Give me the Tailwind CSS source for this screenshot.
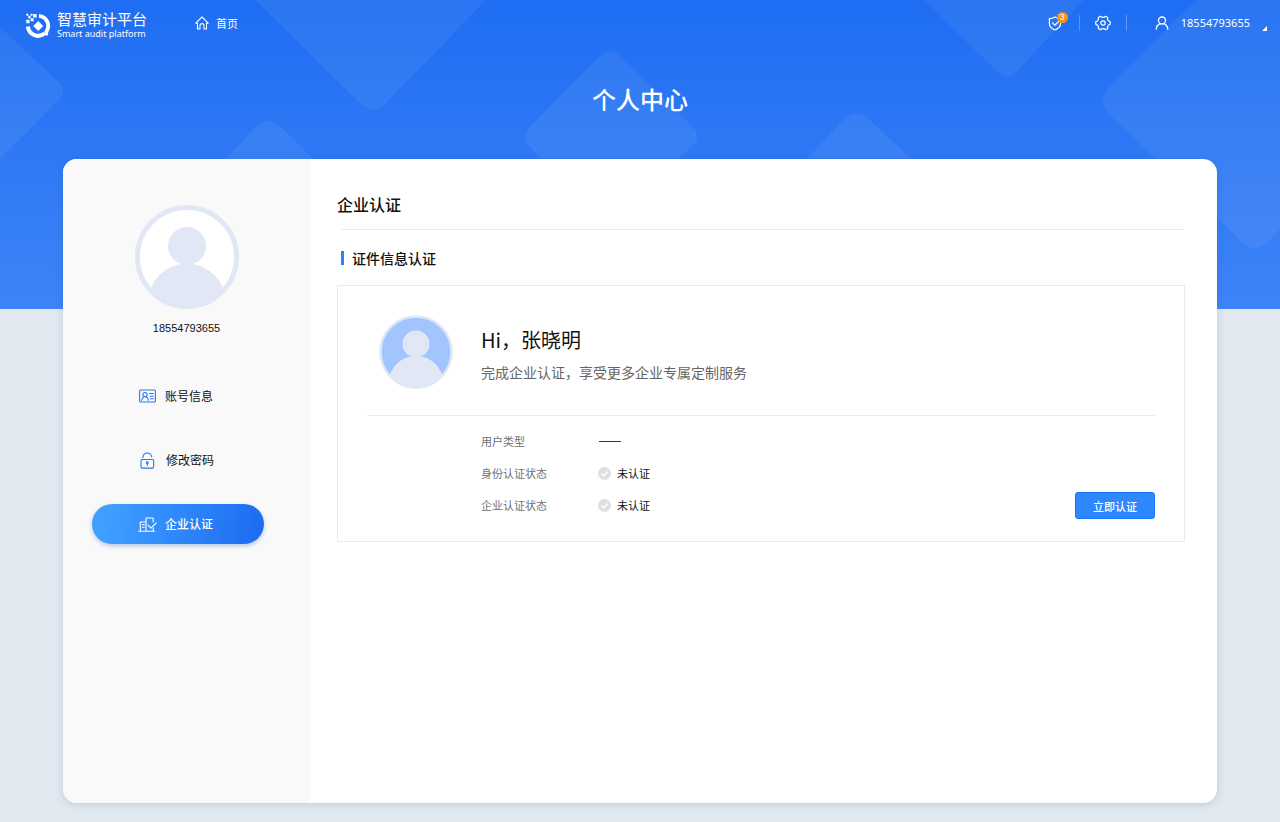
<!DOCTYPE html>
<html lang="zh-CN">
<head>
    <meta charset="UTF-8">
    <meta name="viewport" content="width=device-width, initial-scale=1.0">
    <title>智慧审计平台 - 个人中心</title>
    <script src="https://cdn.jsdelivr.net/npm/@tailwindcss/browser@4"></script>
</head>
<body class="relative isolate flex min-h-screen flex-col bg-[#e2e9f0] font-['Noto_Sans_CJK_SC',sans-serif] text-[11px] leading-4 text-[#111]">

    <!-- Hero background -->
    <div class="absolute inset-x-0 top-0 -z-10 h-[309px] overflow-hidden bg-linear-to-b from-[#1e6df2] to-[#3e84f8]">
        <svg class="h-full w-full" viewBox="0 0 1280 309" preserveAspectRatio="xMidYMin slice" fill="#fff" fill-opacity=".06">
            <path d="M0 27 L57 81 Q69 91 58 101 L0 159Z"/>
            <path d="M255 0 L360 103 Q374 115 386 103 L486 0Z"/>
            <path d="M226 159 L255 127 Q268 115 281 127 L313 159Z"/>
            <path d="M542 159 L530 147 Q521 137 530 127 L600 56 Q610 46 620 56 L692 126 Q702 136 693 145 L679 159 L679 220 L542 220Z"/>
            <path d="M807 159 L843 120 Q856 107 870 120 L911 159Z"/>
            <path d="M923 0 L998 72 Q1007 81 1016 72 L1084 0Z"/>
            <path d="M1195 0 L1109 87 Q1097 101 1109 114 L1242 242 Q1255 254 1268 242 L1280 229 V0Z"/>
        </svg>
    </div>

    <header class="flex h-[46px] items-center pr-3 pl-[25px] text-white">
        <a href="#" class="flex items-center gap-[6px] pt-[5px]">
            <svg class="size-[26px]" viewBox="0 0 26 26" fill="none">
                <path d="M14 2.800 A10 10 0 0 1 21.500 18.300" stroke="#fff" stroke-width="3.800"/>
                <path d="M2.900 13.500 A10.200 10.200 0 0 0 19.800 20.200" stroke="#fff" stroke-width="4"/>
                <path d="M19.400 17.500 l4 1 l-.8 4.200 l-3-.8Z" fill="#fff"/>
                <path d="M13.200 8 L18.200 13 L13.200 18 L8.200 13Z" fill="#fff"/>
                <path d="M1.300 .8h2v2h-2z M3.300 2.800h2.400v2.400H3.300z M5.700 .8h1.800v2H5.700z M8.200 1h3.400v3.400H8.200z M1.300 6.800h3.200v3.400H1.300z M5.700 5.200h3v3h-3z" fill="#fff"/>
            </svg>
            <span class="flex flex-col">
                <span class="text-[15px] leading-4">智慧审计平台</span>
                <span class="font-['Noto_Sans',sans-serif] text-[9px] leading-[13px]">Smart audit platform</span>
            </span>
        </a>
        <nav class="ml-12">
            <a href="#" class="flex items-center gap-[7px]">
                <svg class="size-[14px]" viewBox="0 0 14 14" fill="none" stroke="#fff" stroke-width="1.1" stroke-linejoin="round" stroke-linecap="round">
                    <path d="M.8 7.2 L7 1 L13.2 7.2 H11.5 V13 H9 V9.6 A2 2 0 0 0 5 9.6 V13 H2.5 V7.2Z"/>
                </svg>
                首页
            </a>
        </nav>
        <div class="ml-auto flex items-center">
            <button type="button" class="relative mr-4" aria-label="消息">
                <svg class="size-[15px]" viewBox="0 0 15 15" fill="none" stroke="#fff" stroke-width="1.2" stroke-linejoin="round" stroke-linecap="round">
                    <path d="M7 1 Q9.500 2.600 12.600 2.700 V7.500 Q12.600 11.800 7 14 Q1.400 11.800 1.400 7.500 V2.700 Q4.500 2.600 7 1Z"/>
                    <path d="M4.500 6.800 L6.800 9.200 L11 5.200"/>
                </svg>
                <span class="absolute -top-1 left-[9px] flex size-[11px] items-center justify-center rounded-full bg-[#fa9214] font-['Liberation_Sans',sans-serif] text-[9px] leading-none">3</span>
            </button>
            <span class="h-4 w-px bg-white/25"></span>
            <button type="button" class="mx-[15px]" aria-label="设置">
                <svg class="size-4" viewBox="0 0 16 16" fill="none" stroke="#fff" stroke-width="1.2" stroke-linejoin="round">
                    <path d="M5.300 1.300 Q6.500 2.400 8 2.400 Q9.500 2.400 10.700 1.300 L12.700 2.500 Q12.300 4.300 12.900 5.200 Q13.500 6.200 15.200 6.700 V9.300 Q13.500 9.800 12.900 10.800 Q12.300 11.700 12.700 13.500 L10.700 14.700 Q9.500 13.600 8 13.600 Q6.500 13.600 5.300 14.700 L3.300 13.500 Q3.700 11.700 3.100 10.800 Q2.500 9.800 .8 9.300 V6.700 Q2.500 6.200 3.100 5.200 Q3.700 4.300 3.300 2.500Z"/>
                    <circle cx="8" cy="8" r="2.200"/>
                </svg>
            </button>
            <span class="h-4 w-px bg-white/30"></span>
            <button type="button" class="ml-7 flex items-center font-['Noto_Sans',sans-serif]">
                <svg class="size-[14px]" viewBox="0 0 14 14" fill="none" stroke="#fff" stroke-width="1.300" stroke-linecap="round">
                    <circle cx="7" cy="4.500" r="3.500"/>
                    <path d="M1.200 13.200 Q1.600 9.200 5.200 7.700 M12.800 13.200 Q12.400 9.200 8.800 7.700"/>
                </svg>
                <span class="ml-3">18554793655</span>
                <svg class="mt-[10px] ml-3 size-[6px]" viewBox="0 0 6 6" fill="#fff"><path d="M5 1 V6 H0Z"/></svg>
            </button>
        </div>
    </header>

    <h1 class="pt-[35px] text-center text-[24px] leading-9 font-medium text-white">个人中心</h1>

    <main class="mx-[63px] mt-[42px] mb-[19px] flex flex-1 overflow-hidden rounded-[14px] bg-white shadow-[0_1px_8px_rgba(40,80,130,0.2)]">
        <aside class="flex w-[247px] shrink-0 flex-col items-center bg-[#f9f9f9] pt-[46px]">
            <svg class="size-[104px]" viewBox="0 0 104 104">
                <clipPath id="avatar-lg"><circle cx="52" cy="52" r="51"/></clipPath>
                <circle cx="52" cy="52" r="49.500" fill="#fff" stroke="#e1e7f5" stroke-width="5"/>
                <g fill="#e1e7f5" clip-path="url(#avatar-lg)">
                    <circle cx="52" cy="41" r="19"/>
                    <circle cx="52" cy="97" r="38.500"/>
                </g>
            </svg>
            <p class="mt-[11px] font-['Liberation_Sans',sans-serif]">18554793655</p>

            <nav class="mt-10 flex w-full flex-col gap-6 pl-[29px] text-[12px]">
                <a href="#" class="flex h-10 w-[172px] items-center gap-[9px] rounded-full pl-[47px]">
                    <svg class="h-[14px] w-[17px]" viewBox="0 0 17 14" fill="none" stroke="#2c76f5" stroke-width="1.100" stroke-linecap="round">
                        <rect x=".6" y="1" width="15.800" height="12" rx="1"/>
                        <circle cx="6" cy="5.600" r="2.100"/>
                        <path d="M2.600 11.300 Q3 8.600 5 7.900 M9.400 11.300 Q9 8.600 7 7.900 M10.500 4.500h3.800 M11.300 7.200h3 M11.300 9.800h3"/>
                    </svg>
                    账号信息
                </a>
                <a href="#" class="flex h-10 w-[172px] items-center gap-[10px] rounded-full pl-12">
                    <svg class="h-[17px] w-4" viewBox="0 0 16 17" fill="none" stroke="#2c76f5" stroke-width="1.100" stroke-linecap="round">
                        <rect x="1" y="7.500" width="12.600" height="8.600" rx="1"/>
                        <path d="M2.800 5.800 Q3.300 1 7.300 1 Q10.900 1 11.700 4.800"/>
                        <circle cx="7.300" cy="10.800" r=".9"/>
                        <path d="M7.300 11.500v2"/>
                    </svg>
                    修改密码
                </a>
                <a href="#" aria-current="page" class="flex h-10 w-[172px] items-center gap-2 rounded-full bg-linear-100 from-[#409eff] from-10% to-[#1e6df2] to-95% pl-[46px] font-medium text-white shadow-[0_2px_4px_rgba(30,80,180,0.3)]">
                    <svg class="h-[15px] w-[19px]" viewBox="0 0 19 15" fill="none" stroke="#fff" stroke-width="1.100" stroke-linecap="round" stroke-linejoin="round">
                        <path d="M.8 14.200h15.600 M2.300 14V5h5.400 M8 14V1h7.200v4 M15.200 11v3 M4.500 7.600h1.700 M4.500 10.200h1.700 M10 8.200l3 3 5.200-5.200"/>
                    </svg>
                    企业认证
                </a>
            </nav>
        </aside>

        <section class="min-w-0 flex-1 pt-[33px] pr-8 pl-[27px]">
            <h2 class="text-[16px] leading-6 font-medium">企业认证</h2>
            <div class="mt-[13px] mr-px ml-1 border-t border-[#ebebeb]"></div>
            <h3 class="mt-[18px] ml-1 flex items-center gap-2 text-[14px] leading-5 font-medium">
                <span class="h-[14px] w-[3px] bg-[#1f87ff]"></span>
                证件信息认证
            </h3>

            <div class="mt-[17px] border border-[#ebebeb] px-[29px] pt-7 pb-[22px]">
                <div class="flex items-center gap-[27px] pb-[25px] pl-[11px]">
                    <svg class="size-[76px]" viewBox="0 0 76 76">
                        <clipPath id="avatar-sm"><circle cx="38" cy="38" r="36.500"/></clipPath>
                        <circle cx="38" cy="38" r="35.500" fill="#a2c4ff" stroke="#dfe6f4" stroke-width="2.500"/>
                        <g fill="#e1e7f5" clip-path="url(#avatar-sm)">
                            <circle cx="38" cy="30" r="13.500"/>
                            <circle cx="38" cy="69.500" r="27.500"/>
                        </g>
                    </svg>
                    <div class="pt-1">
                        <p class="text-[20px] leading-7">Hi，张晓明</p>
                        <p class="mt-2 text-[14px] leading-5 text-[#666]">完成企业认证，享受更多企业专属定制服务</p>
                    </div>
                </div>

                <div class="flex items-end justify-between border-t border-[#ebebeb] pt-[17px] pl-[114px]">
                    <dl class="mb-[6px] grid grid-cols-[117px_auto] gap-y-4">
                        <dt class="text-[#707070]">用户类型</dt>
                        <dd class="flex items-center"><span class="ml-px h-px w-[22px] bg-[#333]"></span></dd>
                        <dt class="text-[#707070]">身份认证状态</dt>
                        <dd class="flex items-center gap-[6px]">
                            <svg class="size-[13px]" viewBox="0 0 13 13" fill="none"><circle cx="6.500" cy="6.500" r="6.500" fill="#e0e0e0"/><path d="M3.300 6.500 L5.700 8.800 L9.700 4.600" stroke="#fff" stroke-width="1.400"/></svg>
                            未认证
                        </dd>
                        <dt class="text-[#707070]">企业认证状态</dt>
                        <dd class="flex items-center gap-[6px]">
                            <svg class="size-[13px]" viewBox="0 0 13 13" fill="none"><circle cx="6.500" cy="6.500" r="6.500" fill="#e0e0e0"/><path d="M3.300 6.500 L5.700 8.800 L9.700 4.600" stroke="#fff" stroke-width="1.400"/></svg>
                            未认证
                        </dd>
                    </dl>
                    <button type="button" class="h-[27px] w-20 rounded-[3px] border border-[#1677fa] bg-[#2e87fb] font-medium text-white">立即认证</button>
                </div>
            </div>
        </section>
    </main>

</body>
</html>
